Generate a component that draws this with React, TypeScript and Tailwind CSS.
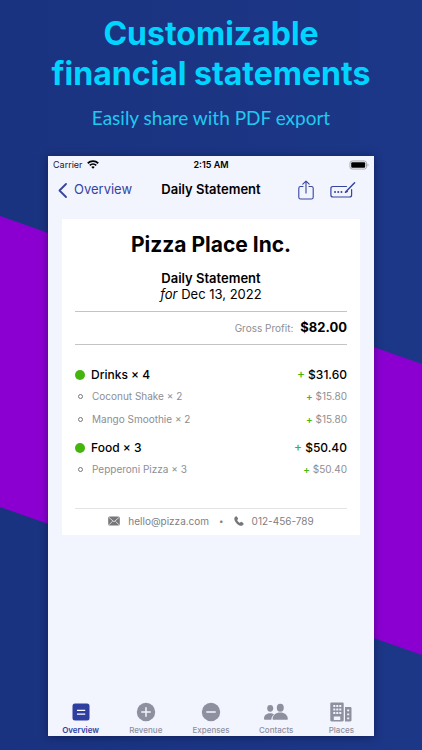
import React, { useState } from 'react';

const groups = [
  {
    name: 'Drinks × 4',
    total: '$31.60',
    items: [
      { name: 'Coconut Shake × 2', total: '$15.80' },
      { name: 'Mango Smoothie × 2', total: '$15.80' },
    ],
  },
  {
    name: 'Food × 3',
    total: '$50.40',
    items: [{ name: 'Pepperoni Pizza × 3', total: '$50.40' }],
  },
];

const OverviewIcon = () => (
  <svg viewBox="0 0 24 20" className="h-5 w-6">
    <rect x="3.5" y="1.5" width="17" height="17" rx="2.5" fill="currentColor" />
    <path d="M8 8.3h8.2M8 12.2h8.2" stroke="#fff" strokeWidth="1.3" />
  </svg>
);

const RevenueIcon = () => (
  <svg viewBox="0 0 24 20" className="h-5 w-6">
    <circle cx="12" cy="10" r="9.2" fill="currentColor" />
    <path d="M7.8 10h8.4M12 5.8v8.4" stroke="#f2f4fe" strokeWidth="1.5" strokeLinecap="round" />
  </svg>
);

const ExpensesIcon = () => (
  <svg viewBox="0 0 24 20" className="h-5 w-6">
    <circle cx="12" cy="10" r="9.2" fill="currentColor" />
    <path d="M7.8 10h8.4" stroke="#f2f4fe" strokeWidth="1.5" strokeLinecap="round" />
  </svg>
);

const ContactsIcon = () => (
  <svg viewBox="0 0 24 20" className="h-5 w-6" fill="currentColor">
    <ellipse cx="6.2" cy="6.3" rx="3" ry="3.4" />
    <path d="M0 16.8c0-3.2 2.4-5.500 6-5.500 1.600 0 3 .4 4 1.100-1.600 1.300-2.600 3.200-2.700 5.400H.8c-.5 0-.8-.4-.8-1z" />
    <ellipse cx="16.300" cy="5.700" rx="3.500" ry="4" />
    <path d="M8.600 16.800c0-3.600 3.300-6.200 7.600-6.200s7.600 2.600 7.600 6.200c0 .7-.3 1-1 1H9.600c-.7 0-1-.3-1-1z" />
  </svg>
);

const PlacesIcon = () => (
  <svg viewBox="0 0 24 20" className="h-5 w-6" fill="currentColor">
    <path
      fillRule="evenodd"
      d="M2.500.5h11c.7 0 1.200.5 1.200 1.200v16.600c0 .7-.5 1.200-1.200 1.200h-11c-.7 0-1.200-.5-1.200-1.200V1.700C1.300 1 1.800.5 2.500.5zM4.300 3v2h2V3zm3 0v2h2V3zm3 0v2h2V3zM4.300 6.500v2h2v-2zm3 0v2h2v-2zm3 0v2h2v-2zM4.300 10v2h2v-2zm3 0v2h2v-2zm3 0v2h2v-2zM4.800 14.500V18h6.500v-3.500z"
    />
    <path
      fillRule="evenodd"
      d="M16 5h5.200c.8 0 1.300.5 1.300 1.300v12c0 .7-.5 1.200-1.300 1.200H16zm2.200 2.500v1.800h2V7.500zm0 4v1.800h2v-1.800zm0 4v1.800h2v-1.800z"
    />
  </svg>
);

const tabs = [
  { label: 'Overview', Icon: OverviewIcon },
  { label: 'Revenue', Icon: RevenueIcon },
  { label: 'Expenses', Icon: ExpensesIcon },
  { label: 'Contacts', Icon: ContactsIcon },
  { label: 'Places', Icon: PlacesIcon },
];

const Backdrop = () => (
  <svg
    viewBox="0 0 422 750"
    preserveAspectRatio="none"
    className="absolute inset-0 -z-10 h-full w-full"
    aria-hidden="true"
  >
    <defs>
      <linearGradient id="navy" x1="0" y1="0" x2="1" y2="0">
        <stop offset="0" stopColor="#1a3380" />
        <stop offset="1" stopColor="#1c3787" />
      </linearGradient>
    </defs>
    <rect width="422" height="750" fill="url(#navy)" />
    <path d="M0 216L422 364V655L0 507z" fill="#8b00d1" />
  </svg>
);

const StatusBar = () => (
  <div className="grid h-[17px] grid-cols-3 items-center px-[5px] text-[9px] text-[#222]">
    <div className="flex items-center gap-1">
      <span>Carrier</span>
      <svg viewBox="0 0 24 18" className="h-[9px] w-3" fill="none" stroke="#000" strokeWidth="3.4">
        <path d="M1.500 6.500c6-5.500 15-5.500 21 0M5.500 10.800c3.700-3.400 9.300-3.400 13 0" />
        <path d="M12 17.500l-3.400-3.600c2-1.700 4.800-1.700 6.800 0z" fill="#000" stroke="none" />
      </svg>
    </div>
    <span className="text-center font-semibold text-black">2:15 AM</span>
    <svg viewBox="0 0 20 10" className="h-[10px] w-5 justify-self-end">
      <rect x="1" y="1" width="16.500" height="8" rx="2.200" fill="#fff" stroke="#a5a6ab" />
      <rect x="2.200" y="2.200" width="14" height="5.600" rx="1" fill="#000" />
      <path d="M18.500 3.500c1.300.4 1.300 2.600 0 3z" fill="#a5a6ab" />
    </svg>
  </div>
);

const NavBar = () => (
  <div className="grid h-[34px] grid-cols-[1fr_auto_1fr] items-center px-[10px] text-[13px] text-[#3645a0]">
    <a href="#overview" className="flex items-center gap-[7px]">
      <svg viewBox="0 0 9 15" className="h-[15px] w-[9px]" fill="none" stroke="currentColor" strokeWidth="1.800" strokeLinecap="round" strokeLinejoin="round">
        <path d="M8 1L1.500 7.500 8 14" />
      </svg>
      Overview
    </a>
    <h2 className="font-semibold text-black">Daily Statement</h2>
    <div className="flex items-center justify-end gap-4 pr-2">
      <button aria-label="Share">
        <svg viewBox="0 0 16 20" className="h-5 w-4" fill="none" stroke="currentColor" strokeWidth="1.100" strokeLinecap="round" strokeLinejoin="round">
          <path d="M5 6.500H2.600C1.400 6.500.8 7.100.8 8.300v8.900c0 1.200.6 1.800 1.800 1.800h10.800c1.200 0 1.800-.6 1.800-1.800V8.300c0-1.200-.6-1.800-1.800-1.800H11" />
          <path d="M8 13V1.200M4.800 4.200L8 1.100l3.200 3.100" />
        </svg>
      </button>
      <button aria-label="Edit fields">
        <svg viewBox="0 0 26 18" className="h-[18px] w-[26px]" fill="none" stroke="currentColor" strokeWidth="1.200" strokeLinecap="round" strokeLinejoin="round">
          <path d="M16.500 5.500H3C1.600 5.500.9 6.200.9 7.600V14c0 1.300.7 2 2.100 2h16.500c1.400 0 2.100-.7 2.100-2V8.500" />
          <path d="M24.600 1.800L16.800 9.700l-1.300 1.600 1.800-.9" strokeWidth="1.500" />
          <path d="M5 11h.1M8.200 11h.1M11.400 11h.1" strokeWidth="1.900" />
        </svg>
      </button>
    </div>
  </div>
);

const Statement = () => (
  <article className="mx-[14px] mt-3 bg-white px-[13px] pt-3 pb-[6px] text-black">
    <h3 className="text-center text-[21px] leading-7 font-bold">Pizza Place Inc.</h3>
    <div className="mt-[11px] text-center text-[13px] leading-4">
      <p className="font-semibold">Daily Statement</p>
      <p>
        <em>for</em> Dec 13, 2022
      </p>
    </div>
    <div className="mt-[9px] flex h-[34px] items-center justify-end gap-[7px] border-y border-[#c4c4c6]">
      <span className="text-[10px] text-[#8e8e93]">Gross Profit:</span>
      <span className="text-[13px] font-bold">$82.00</span>
    </div>

    <div className="mt-5 flex flex-col gap-[7px]">
      {groups.map((group) => (
        <section key={group.name}>
          <div className="flex h-5 items-center text-[12px] font-medium">
            <span className="mr-[6px] size-[10px] rounded-full bg-[#45b50e]" />
            <span>{group.name}</span>
            <span className="ml-auto">
              <span className="text-[#45b50e]">+</span> {group.total}
            </span>
          </div>
          {group.items.map((item) => (
            <div key={item.name} className="flex h-[23px] items-center text-[10px] text-[#8e8e93]">
              <span className="mr-[9px] ml-[3px] size-[5px] rounded-full border border-[#77777b]" />
              <span>{item.name}</span>
              <span className="ml-auto">
                <span className="font-medium text-[#45b50e]">+</span> {item.total}
              </span>
            </div>
          ))}
        </section>
      ))}
    </div>

    <footer className="mt-[27px] flex items-center justify-center border-t border-[#e4e4e6] pt-1 text-[10px] leading-4 text-[#808084]">
      <svg viewBox="0 0 12 10" className="mr-2 h-[10px] w-3">
        <rect x=".2" y=".5" width="11.600" height="9" rx="1.500" fill="#77777b" />
        <path d="M1 1.500l5 4.300 5-4.300M1 8.800l3.500-3.500M11 8.800L7.500 5.300" fill="none" stroke="#fff" strokeWidth=".7" />
      </svg>
      <span>hello@pizza.com</span>
      <span className="mx-[10px] text-[8px]">•</span>
      <svg viewBox="0 0 24 24" className="mr-2 h-[10px] w-[10px]" fill="#77777b">
        <path d="M5.300.8c-1.300 0-4.500 2.300-4.500 5.500 0 7.500 9.500 17 17 17 3.200 0 5.400-3.300 5.400-4.700 0-1.100-4.800-4.600-6-4.600-1.300 0-2 2-3.200 2-1.500 0-6.200-4.500-6.200-6 0-1.200 2.200-1.900 2.200-3.200C10 5.600 6.500.8 5.300.8z" />
      </svg>
      <span>012-456-789</span>
    </footer>
  </article>
);

export default function App() {
  const [activeTab, setActiveTab] = useState('Overview');

  return (
    <div className="relative isolate flex min-h-screen flex-col px-12 pt-[14px] pb-[14px] font-[Inter,sans-serif]">
      <Backdrop />

      <header className="-mx-8 text-center text-[#00d5ff]">
        <h1 className="text-[32px] leading-10 font-bold">
          Customizable
          <br />
          financial statements
        </h1>
        <p className="mt-[10px] font-[Lato,sans-serif] text-[19px] leading-7 text-[#1fcaf0]">
          Easily share with PDF export
        </p>
      </header>

      <main className="mt-6 flex flex-1 flex-col bg-[#f2f4fe] shadow-[0_1px_8px_rgba(0,0,30,0.4)]">
        <StatusBar />
        <NavBar />
        <Statement />

        {/* Tab Bar */}
        <nav className="mt-auto grid grid-cols-5 pb-px">
          {tabs.map(({ label, Icon }) => (
            <button
              key={label}
              onClick={() => setActiveTab(label)}
              className={`flex flex-col items-center gap-[3px] text-[8px] leading-[10px] ${
                activeTab === label ? 'font-semibold text-[#2f3fa0]' : 'font-medium text-[#8e90a0]'
              }`}
            >
              <Icon />
              {label}
            </button>
          ))}
        </nav>
      </main>
    </div>
  );
}
